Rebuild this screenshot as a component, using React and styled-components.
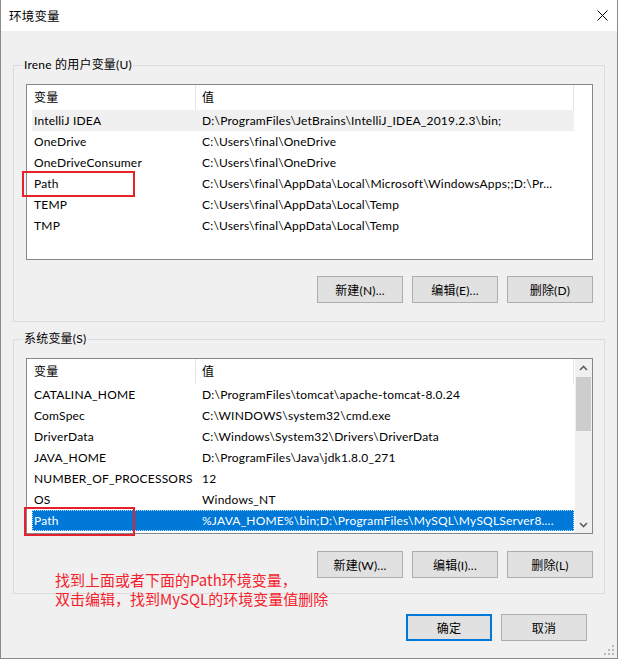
import React from 'react';
import styled, { createGlobalStyle, css } from 'styled-components';

const FONT = `Lato, "Noto Sans CJK SC", sans-serif`;

const Global = createGlobalStyle`
  html, body { margin: 0; padding: 0; background: #f0f0f0; }
  body { font-family: ${FONT}; }
  * { box-sizing: border-box; }
`;

const Window = styled.div`
  position: relative;
  width: 618px;
  height: 659px;
  border: 1px solid #8a8a8a;
  border-top: none;
  background: #f0f0f0;
  display: flex;
  flex-direction: column;
  font: 12px ${FONT};
  letter-spacing: 0.2px;
  color: #000;
  overflow: hidden;
`;

const TitleBar = styled.div`
  height: 31px;
  flex: none;
  background: #fff;
  display: flex;
  align-items: center;
  justify-content: space-between;
  padding-left: 8px;
  font-size: 12.5px;
`;

const CloseButton = styled.div`
  width: 30px;
  height: 31px;
  display: flex;
  align-items: center;
  justify-content: center;
`;

const Body = styled.div`
  flex: 1;
  display: flex;
  flex-direction: column;
  padding: 26px 12px 0 12px;
`;

const Group = styled.fieldset`
  margin: ${(p) => (p.$second ? '9px 0 0 0' : '0')};
  border: 1px solid #dcdcdc;
  padding: 11px 11px ${(p) => (p.$second ? '15px' : '18px')} 12px;
  min-width: 0;
  display: flex;
  flex-direction: column;
`;

const Legend = styled.legend`
  padding: 0 1px;
  margin-left: -3px;
  font-size: 12px;
  line-height: 16px;
  color: #000;
`;

const List = styled.div`
  height: 176px;
  border: 1px solid #828790;
  background: #fff;
  display: flex;
  overflow: hidden;
`;

const ListMain = styled.div`
  flex: 1;
  min-width: 0;
  display: flex;
  flex-direction: column;
`;

const Header = styled.div`
  width: 547px;
  height: 25px;
  flex: none;
  display: grid;
  grid-template-columns: 169px 378px;
`;

const HeadCell = styled.div`
  border-right: 1px solid #e5e5e5;
  padding-left: ${(p) => (p.$first ? '7px' : '6px')};
  line-height: 25px;
  white-space: nowrap;
`;

const Rows = styled.div`
  width: 542px;
  margin-left: 5px;
  display: flex;
  flex-direction: column;
`;

const Row = styled.div`
  height: 21px;
  display: grid;
  grid-template-columns: 163px 379px;
  line-height: 21px;
  white-space: nowrap;
  ${(p) =>
    p.$hover &&
    css`
      background: #f0f0f0;
    `}
  ${(p) =>
    p.$selected &&
    css`
      background: #0078d7;
      color: #fff;
      outline: 1px dotted rgba(255, 255, 255, 0.75);
      outline-offset: -1px;
    `}
`;

const Cell = styled.div`
  overflow: hidden;
  padding-left: ${(p) => (p.$first ? '2px' : '7px')};
`;

const Scrollbar = styled.div`
  width: 17px;
  flex: none;
  background: #f0f0f0;
  display: flex;
  flex-direction: column;
`;

const Arrow = styled.div`
  height: 17px;
  flex: none;
  display: flex;
  align-items: center;
  justify-content: center;
`;

const Thumb = styled.div`
  height: 54px;
  margin: 1px 1px 0 1px;
  background: #cdcdcd;
  flex: none;
`;

const Track = styled.div`
  flex: 1;
`;

const ButtonRow = styled.div`
  display: flex;
  justify-content: flex-end;
  gap: 9px;
  margin-top: ${(p) => p.$top || '16px'};
  padding-right: ${(p) => p.$right || '0'};
`;

const Button = styled.div`
  width: 86px;
  height: 27px;
  background: #e1e1e1;
  border: 1px solid #adadad;
  display: flex;
  align-items: center;
  justify-content: center;
  font-size: 12px;
  color: #000;
  ${(p) =>
    p.$primary &&
    css`
      border: 2px solid #0078d7;
    `}
`;

const RedBox = styled.div`
  position: absolute;
  border: 2px solid #e5212b;
  left: ${(p) => p.$x}px;
  top: ${(p) => p.$y}px;
  width: ${(p) => p.$w}px;
  height: ${(p) => p.$h}px;
  pointer-events: none;
`;

const Note = styled.div`
  position: absolute;
  left: 54px;
  top: 570px;
  color: #f5222d;
  font: 15px/19px "Noto Sans CJK SC", sans-serif;
  letter-spacing: 0;
  white-space: nowrap;
`;

const Grip = styled.div`
  position: absolute;
  right: 2px;
  bottom: 2px;
  width: 12px;
  height: 12px;
`;

const Chevron = ({ down }) => (
  <svg width="9" height="6" viewBox="0 0 9 6">
    <polyline
      points={down ? '1,1 4.5,4.5 8,1' : '1,5 4.5,1.5 8,5'}
      fill="none"
      stroke="#606060"
      strokeWidth="1.6"
    />
  </svg>
);

const userVars = [
  ['IntelliJ IDEA', 'D:\\ProgramFiles\\JetBrains\\IntelliJ_IDEA_2019.2.3\\bin;', 'hover'],
  ['OneDrive', 'C:\\Users\\final\\OneDrive'],
  ['OneDriveConsumer', 'C:\\Users\\final\\OneDrive'],
  ['Path', 'C:\\Users\\final\\AppData\\Local\\Microsoft\\WindowsApps;;D:\\Pr...'],
  ['TEMP', 'C:\\Users\\final\\AppData\\Local\\Temp'],
  ['TMP', 'C:\\Users\\final\\AppData\\Local\\Temp'],
];

const sysVars = [
  ['CATALINA_HOME', 'D:\\ProgramFiles\\tomcat\\apache-tomcat-8.0.24'],
  ['ComSpec', 'C:\\WINDOWS\\system32\\cmd.exe'],
  ['DriverData', 'C:\\Windows\\System32\\Drivers\\DriverData'],
  ['JAVA_HOME', 'D:\\ProgramFiles\\Java\\jdk1.8.0_271'],
  ['NUMBER_OF_PROCESSORS', '12'],
  ['OS', 'Windows_NT'],
  ['Path', '%JAVA_HOME%\\bin;D:\\ProgramFiles\\MySQL\\MySQLServer8....', 'selected'],
];

const VarList = ({ rows, scroll }) => (
  <List>
    <ListMain>
      <Header>
        <HeadCell $first>变量</HeadCell>
        <HeadCell>值</HeadCell>
      </Header>
      <Rows>
        {rows.map(([k, v, s]) => (
          <Row key={k} $hover={s === 'hover'} $selected={s === 'selected'}>
            <Cell $first>{k}</Cell>
            <Cell>{v}</Cell>
          </Row>
        ))}
      </Rows>
    </ListMain>
    {scroll && (
      <Scrollbar>
        <Arrow>
          <Chevron />
        </Arrow>
        <Thumb />
        <Track />
        <Arrow>
          <Chevron down />
        </Arrow>
      </Scrollbar>
    )}
  </List>
);

export default function App() {
  return (
    <>
      <Global />
      <Window>
        <TitleBar>
          <span>环境变量</span>
          <CloseButton>
            <svg width="11" height="11" viewBox="0 0 11 11">
              <path d="M0.5 0.5 L10.5 10.5 M10.5 0.5 L0.5 10.5" stroke="#000" strokeWidth="1" />
            </svg>
          </CloseButton>
        </TitleBar>
        <Body>
          <Group>
            <Legend>Irene 的用户变量(U)</Legend>
            <VarList rows={userVars} />
            <ButtonRow>
              <Button>新建(N)...</Button>
              <Button>编辑(E)...</Button>
              <Button>删除(D)</Button>
            </ButtonRow>
          </Group>
          <Group $second>
            <Legend>系统变量(S)</Legend>
            <VarList rows={sysVars} scroll />
            <ButtonRow $top="17px">
              <Button>新建(W)...</Button>
              <Button>编辑(I)...</Button>
              <Button>删除(L)</Button>
            </ButtonRow>
          </Group>
          <ButtonRow $top="20px" $right="18px">
            <Button $primary>确定</Button>
            <Button>取消</Button>
          </ButtonRow>
        </Body>
        <RedBox $x={21} $y={171} $w={113} $h={26} />
        <RedBox $x={23} $y={507} $w={111} $h={29} />
        <Note>
          找到上面或者下面的Path环境变量，
          <br />
          双击编辑，找到MySQL的环境变量值删除
        </Note>
        <Grip>
          <svg width="12" height="12" viewBox="0 0 12 12">
            {[
              [9, 1], [9, 5], [5, 5], [9, 9], [5, 9], [1, 9],
            ].map(([x, y]) => (
              <rect key={`${x}-${y}`} x={x} y={y} width="2" height="2" fill="#b8b8b8" />
            ))}
          </svg>
        </Grip>
      </Window>
    </>
  );
}
